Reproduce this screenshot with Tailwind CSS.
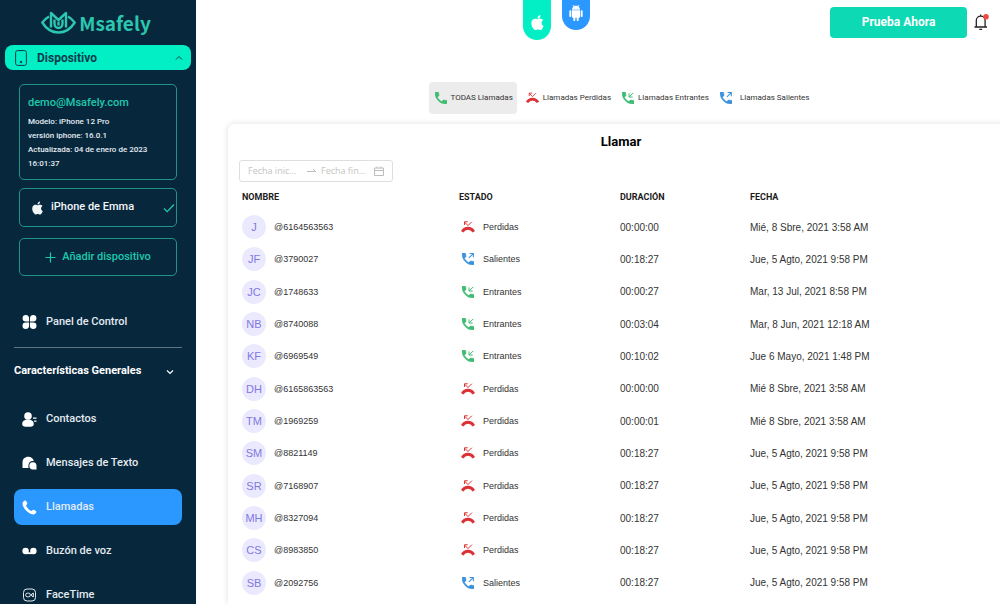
<!DOCTYPE html>
<html lang="es">
<head>
<meta charset="utf-8">
<title>Msafely - Llamadas</title>
<script src="https://cdn.jsdelivr.net/npm/@tailwindcss/browser@4"></script>
</head>
<body class="flex h-screen overflow-hidden bg-white font-['Roboto',sans-serif] text-black">

<svg class="hidden" aria-hidden="true">
  <symbol id="apple" viewBox="0 0 24 24"><path fill="currentColor" d="M12.152 6.896c-.948 0-2.415-1.078-3.96-1.04-2.04.027-3.91 1.183-4.961 3.014-2.117 3.675-.546 9.103 1.519 12.09 1.013 1.454 2.208 3.09 3.792 3.039 1.52-.065 2.09-.987 3.935-.987 1.831 0 2.35.987 3.96.948 1.637-.026 2.676-1.48 3.676-2.948 1.156-1.688 1.636-3.325 1.662-3.415-.039-.013-3.182-1.221-3.22-4.857-.026-3.04 2.48-4.494 2.597-4.559-1.429-2.09-3.623-2.324-4.39-2.376-2-.156-3.675 1.09-4.61 1.09zM15.53 3.83c.843-1.012 1.4-2.427 1.245-3.83-1.207.052-2.662.805-3.532 1.818-.78.896-1.454 2.338-1.273 3.714 1.338.104 2.715-.688 3.559-1.701"/></symbol>
  <symbol id="call" viewBox="3 3 18 18"><path fill="currentColor" stroke="currentColor" stroke-width=".7" d="M6.62 10.79c1.44 2.83 3.76 5.14 6.59 6.59l2.2-2.2c.27-.27.67-.36 1.02-.24 1.12.37 2.33.57 3.57.57.55 0 1 .45 1 1V20c0 .55-.45 1-1 1-9.39 0-17-7.61-17-17 0-.55.45-1 1-1h3.5c.55 0 1 .45 1 1 0 1.25.2 2.45.57 3.57.11.35.03.74-.25 1.02l-2.2 2.2z"/></symbol>
  <symbol id="in" viewBox="3 3 18 18"><use href="#call" x="3" y="3" width="18" height="18"/><path fill="none" stroke="currentColor" stroke-width="1.5" d="M20 4.2 14 10.2M13.6 5.2v5.4H19"/></symbol>
  <symbol id="out" viewBox="3 3 18 18"><use href="#call" x="3" y="3" width="18" height="18"/><path fill="none" stroke="currentColor" stroke-width="1.6" d="M13.4 10.4 19.8 4M14.4 3.8H20v5.6"/></symbol>
  <symbol id="missed" viewBox="0 2 24 20"><path fill="none" stroke="currentColor" stroke-width="4.8" d="M2 20C7 12.200 17 12.200 22 20"/><path fill="none" stroke="currentColor" stroke-width="1.700" d="M18.500 3l-6.500 6.500-6-6M6 8.500V3h5.500"/></symbol>
</svg>

<aside class="flex w-[196px] shrink-0 flex-col bg-[#07273d]">
  <a href="#" class="flex h-[45px] shrink-0 items-center justify-center gap-[3px] pr-1 text-[#2cc7ae]" aria-label="Msafely">
    <svg class="h-[23px] w-[35px]" viewBox="0 0 35 23" fill="none" stroke="currentColor" stroke-width="2.400" stroke-linejoin="round" aria-hidden="true">
      <path d="M8 5.500C5.500 7 3 9.200 1.300 11.500 5 17.500 11 21.500 17.500 21.500S30 17.500 33.700 11.500C32 9.200 29.500 7 27 5.500"/>
      <path d="M10 16.500V2l7.500 7L25 2v14.500"/>
      <path d="M13.500 8.500v4c0 6 8 6 8 0v-4M17.500 10.500v4"/>
    </svg>
    <span class="font-['Noto_Sans_CJK_SC',sans-serif] text-[19px] leading-6 font-bold">Msafely</span>
  </a>

  <button class="mx-[5px] flex h-[25px] shrink-0 items-center rounded-lg bg-[#02efc5] pr-2 pl-[10px] text-left text-[#0b3b4c]">
    <svg class="h-4 w-3" viewBox="0 0 12 16" fill="none" stroke="currentColor" aria-hidden="true"><rect x=".6" y=".6" width="10.800" height="14.800" rx="2"/><circle cx="6" cy="12" r=".8" fill="currentColor"/></svg>
    <span class="ml-[10px] flex-1 text-xs font-bold">Dispositivo</span>
    <svg class="h-2 w-2" viewBox="0 0 8 8" fill="none" stroke="currentColor" aria-hidden="true"><path d="M1 5.500 4 2.500l3 3"/></svg>
  </button>

  <section class="mx-[19px] mt-[14px] flex shrink-0 flex-col gap-2">
    <div class="rounded-[5px] border border-[#209585] px-2 pt-[10px] pb-2 text-[8px] leading-[14px] font-medium text-[#e5edf2]">
      <p class="mb-1 text-[11px] leading-4 text-[#1fc9ab]">demo@Msafely.com</p>
      <p>Modelo: iPhone 12 Pro</p>
      <p>versión iphone: 16.0.1</p>
      <p>Actualizada: 04 de enero de 2023</p>
      <p>16:01:37</p>
    </div>
    <button class="flex h-[39px] items-center rounded-[5px] border border-[#209585] pl-[11px] text-left text-[11px] font-medium text-[#f2f6f8]">
      <svg class="h-[14px] w-[13px]" aria-hidden="true"><use href="#apple"/></svg>
      <span class="ml-[7px] flex-1">iPhone de Emma</span>
      <svg class="mr-px h-3 w-3 text-[#22cdb0]" viewBox="0 0 12 12" fill="none" stroke="currentColor" stroke-width="1.200" aria-hidden="true"><path d="m1 6.500 3.200 3.200L11 2.500"/></svg>
    </button>
    <button class="mt-[3px] flex h-[38px] items-center justify-center gap-[6px] rounded-[5px] border border-[#209585] text-[11px] font-medium text-[#1fc9ab]">
      <svg class="h-[11px] w-[11px]" viewBox="0 0 11 11" fill="none" stroke="currentColor" stroke-width="1.200" aria-hidden="true"><path d="M5.500.5v10M.5 5.500h10"/></svg>
      <span>Añadir dispositivo</span>
    </button>
  </section>

  <nav class="mx-[14px] mt-[28px] flex shrink-0 flex-col text-[11px] font-medium text-[#e3ebf0]">
    <a href="#" class="flex h-9 items-center gap-[9px] pl-2">
      <svg class="h-[14px] w-[15px] text-white" viewBox="0 0 15 15" fill="currentColor" aria-hidden="true"><path d="M3.600 0A3.600 3.600 0 0 1 7 3.600V7H3.600A3.500 3.500 0 0 1 3.600 0M11.400 0a3.500 3.500 0 0 1 0 7H8V3.600A3.600 3.600 0 0 1 11.400 0M3.600 8H7v3.400A3.500 3.500 0 1 1 3.600 8M8 8h3.400A3.500 3.500 0 1 1 8 11.400z"/></svg>
      <span>Panel de Control</span>
    </a>
    <button class="mt-[7px] flex h-12 items-center justify-between border-t border-[#5d7485] pr-2 text-left font-bold text-white">
      <span>Características Generales</span>
      <svg class="h-2 w-2" viewBox="0 0 8 8" fill="none" stroke="currentColor" stroke-width="1.200" aria-hidden="true"><path d="m1 2.500 3 3 3-3"/></svg>
    </button>
    <div class="mt-[6px] flex flex-col gap-2">
      <a href="#" class="flex h-9 items-center gap-[9px] pl-2">
        <svg class="h-[15px] w-[15px] text-white" viewBox="0 0 15 15" fill="currentColor" aria-hidden="true"><circle cx="6" cy="4" r="3.800"/><path d="M6 7.500c3.500 0 5.800 1.600 5.800 4.500 0 2-1.500 2.800-5.800 2.800S.2 14 .2 12C.2 9.100 2.500 7.500 6 7.500M11 5.500h3.500v1.200H11zM12 8.500h2.500v1.200H12z"/></svg>
        <span>Contactos</span>
      </a>
      <a href="#" class="flex h-9 items-center gap-[9px] pl-2">
        <svg class="h-[14px] w-[15px] text-white" viewBox="0 0 15 14" fill="currentColor" aria-hidden="true"><path d="M.5 12V6.500C.5 3 3 .8 6.300.8c2.800 0 5 1.600 5.500 4.200-3.700-.5-6 2-5.200 7z"/><path d="M14.500 13.500v-4a3.600 3.600 0 1 0-3.600 4z"/></svg>
        <span>Mensajes de Texto</span>
      </a>
      <a href="#" aria-current="page" class="flex h-9 items-center gap-[9px] rounded-lg bg-[#2b98ff] pl-2">
        <svg class="h-[15px] w-[15px] text-white" viewBox="0 0 15 15" fill="currentColor" aria-hidden="true"><path d="M3.300.6c.7 0 2 2.200 2 3 0 .9-1.200 1.300-1.100 2.100.2 1.500 3.400 4.900 5 5.200.8.100 1.300-1.200 2.200-1.200.8 0 3 1.300 3 2.100 0 1-1.600 2.700-3 2.700C7 14.500.5 8 .5 3.700.5 2.300 2.200.6 3.300.6"/></svg>
        <span>Llamadas</span>
      </a>
      <a href="#" class="flex h-9 items-center gap-[9px] pl-2">
        <svg class="h-[14px] w-[15px] text-white" viewBox="0 0 15 14" aria-hidden="true"><path d="M3.500 9.200h8" stroke="currentColor" stroke-width="1.800"/><g fill="currentColor"><circle cx="3.600" cy="7" r="3.200"/><circle cx="11.400" cy="7" r="3.200"/></g></svg>
        <span>Buzón de voz</span>
      </a>
      <a href="#" class="flex h-9 items-center gap-[9px] pl-2">
        <svg class="h-[14px] w-[15px]" viewBox="0 0 15 14" fill="none" stroke="currentColor" aria-hidden="true"><rect x="1.500" y="1" width="12" height="12" rx="3.500"/><rect x="3.700" y="5.200" width="4.600" height="3.600" rx="1.600"/><path d="m11.300 5-2.500 2 2.500 2z"/></svg>
        <span>FaceTime</span>
      </a>
    </div>
  </nav>
</aside>

<main class="flex min-w-0 flex-1 flex-col">
  <header class="flex h-[82px] shrink-0 items-start pr-[11px]">
    <div class="flex-[327]"></div>
    <button aria-label="iOS" class="flex h-10 w-7 items-end justify-center rounded-b-full bg-[#02efc5] pb-[10px] text-white"><svg class="h-[15px] w-[15px]" aria-hidden="true"><use href="#apple"/></svg></button>
    <button aria-label="Android" class="ml-[11px] flex h-[30px] w-7 items-end justify-center rounded-b-full bg-[#2b98ff] pb-[9px] text-white">
      <svg class="h-4 w-4" viewBox="0 0 24 24" fill="currentColor" aria-hidden="true"><path d="M6 18c0 .55.45 1 1 1h1v3.500c0 .83.67 1.500 1.500 1.500s1.500-.67 1.500-1.500V19h2v3.500c0 .83.67 1.500 1.500 1.500s1.500-.67 1.500-1.500V19h1c.55 0 1-.45 1-1V8H6v10zM3.500 8C2.670 8 2 8.670 2 9.500v7c0 .83.67 1.500 1.500 1.500S5 17.330 5 16.500v-7C5 8.670 4.330 8 3.500 8zm17 0c-.83 0-1.500.67-1.500 1.500v7c0 .83.67 1.500 1.500 1.500s1.500-.67 1.500-1.500v-7c0-.83-.67-1.500-1.500-1.500zm-4.970-5.840l1.300-1.300c.2-.2.2-.51 0-.71-.2-.2-.51-.2-.71 0l-1.480 1.480C13.850 1.230 12.950 1 12 1c-.96 0-1.860.23-2.660.63L7.850.15c-.2-.2-.51-.2-.71 0-.2.2-.2.51 0 .71l1.310 1.310C6.970 3.260 6 5.010 6 7h12c0-1.990-.97-3.750-2.470-4.840zM10 5H9V4h1v1zm5 0h-1V4h1v1z"/></svg>
    </button>
    <div class="flex-[240]"></div>
    <button class="mt-[7px] h-[31px] w-[137px] rounded-[4px] bg-[#0dd9b4] pb-[2px] text-xs font-bold text-white">Prueba Ahora</button>
    <button aria-label="Notificaciones" class="mt-[13px] ml-[7px]">
      <svg class="h-[18px] w-[15px] text-[#222]" viewBox="0 0 15 18" fill="none" stroke="currentColor" stroke-width="1.300" aria-hidden="true"><path d="M.5 14h12.500M2.300 14V7.500a4.400 4.400 0 0 1 8.800 0V14M6.700 3V1.500M5.300 16.400h2.800"/><circle cx="12" cy="3.700" r="2.800" fill="#ee4a45" stroke="none"/></svg>
    </button>
  </header>

  <nav class="-mr-[14px] ml-8 flex h-8 shrink-0 items-stretch justify-center gap-[9px] pr-[4px] text-[8px] text-[#333]">
    <button class="flex items-center gap-1 rounded-[4px] bg-[#ececec] pr-1 pl-[6px]"><svg class="h-3 w-[12px] text-[#3dbd72]" aria-hidden="true"><use href="#call"/></svg>TODAS Llamadas</button>
    <button class="flex items-center gap-1"><svg class="h-[12px] w-[13px] text-[#dc3236]" aria-hidden="true"><use href="#missed"/></svg>Llamadas Perdidas</button>
    <button class="ml-[2px] flex items-center gap-1"><svg class="h-3 w-3 text-[#3dbd72]" aria-hidden="true"><use href="#in"/></svg>Llamadas Entrantes</button>
    <button class="ml-[2px] flex items-center gap-2"><svg class="h-3 w-3 text-[#3b92dc]" aria-hidden="true"><use href="#out"/></svg>Llamadas Salientes</button>
  </nav>

  <section class="mt-[10px] -mr-[14px] ml-8 flex-1 rounded-t-md bg-white px-[11px] pt-2 shadow-[0_0_6px_rgba(0,0,0,0.13)]">
    <h1 class="text-center text-[13px] leading-5 font-bold">Llamar</h1>
    <div class="mt-2 flex h-[22px] w-[154px] items-center rounded-[3px] border border-[#dedede] px-2 text-[#bdbdbd]">
      <input aria-label="Fecha inicial" placeholder="Fecha inic..." class="w-[54px] font-['Open_Sans',sans-serif] text-[9px] outline-none placeholder:text-[#c4c4c4]">
      <svg class="mx-[5px] h-2 w-[9px] shrink-0" viewBox="0 0 9 8" fill="none" stroke="currentColor" aria-hidden="true"><path d="M0 4.500h8.500M6 2l2.500 2.500"/></svg>
      <input aria-label="Fecha final" placeholder="Fecha fin..." class="w-[54px] min-w-0 font-['Open_Sans',sans-serif] text-[9px] outline-none placeholder:text-[#c4c4c4]">
      <svg class="h-[10px] w-[10px] shrink-0" viewBox="0 0 10 10" fill="none" stroke="currentColor" aria-hidden="true"><path d="M.5 2h9v7.500h-9zM.5 4.500h9M3 .5v2M7 .5v2"/></svg>
    </div>
    <table class="mt-[2px] ml-[3px] h-[415px] table-fixed border-collapse font-['Liberation_Sans',sans-serif] text-[10px] text-[#333]">
      <thead>
        <tr class="h-[27px] text-left font-['Roboto',sans-serif] text-[9px] text-[#1c1c1c]">
          <th scope="col" class="w-[217px]">NOMBRE</th>
          <th scope="col" class="w-[161px]">ESTADO</th>
          <th scope="col" class="w-[130px]">DURACIÓN</th>
          <th scope="col" class="w-[250px]">FECHA</th>
        </tr>
      </thead>
      <tbody id="calls"></tbody>
    </table>
  </section>
</main>

<script>
  const calls = [
    ["J", "@6164563563", "missed", "00:00:00", "Mié, 8 Sbre, 2021 3:58 AM"],
    ["JF", "@3790027", "out", "00:18:27", "Jue, 5 Agto, 2021 9:58 PM"],
    ["JC", "@1748633", "in", "00:00:27", "Mar, 13 Jul, 2021 8:58 PM"],
    ["NB", "@8740088", "in", "00:03:04", "Mar, 8 Jun, 2021 12:18 AM"],
    ["KF", "@6969549", "in", "00:10:02", "Jue 6 Mayo, 2021 1:48 PM"],
    ["DH", "@6165863563", "missed", "00:00:00", "Mié 8 Sbre, 2021 3:58 AM"],
    ["TM", "@1969259", "missed", "00:00:01", "Mié 8 Sbre, 2021 3:58 AM"],
    ["SM", "@8821149", "missed", "00:18:27", "Jue, 5 Agto, 2021 9:58 PM"],
    ["SR", "@7168907", "missed", "00:18:27", "Jue, 5 Agto, 2021 9:58 PM"],
    ["MH", "@8327094", "missed", "00:18:27", "Jue, 5 Agto, 2021 9:58 PM"],
    ["CS", "@8983850", "missed", "00:18:27", "Jue, 5 Agto, 2021 9:58 PM"],
    ["SB", "@2092756", "out", "00:18:27", "Jue, 5 Agto, 2021 9:58 PM"]
  ];
  const kinds = {
    missed: ["Perdidas", "text-[#dc3236]"],
    in: ["Entrantes", "text-[#3dbd72]"],
    out: ["Salientes", "text-[#3b92dc]"]
  };
  document.getElementById("calls").innerHTML = calls.map(([initials, name, kind, duration, date]) => `
    <tr class="h-8">
      <td class="p-0"><div class="flex items-center gap-2"><span class="flex h-6 w-6 items-center justify-center rounded-full bg-[#ebe9fd] text-[11px] text-[#8078e2]">${initials}</span><span class="text-[9px] leading-3">${name}</span></div></td>
      <td class="p-0"><div class="flex items-center gap-2 pl-[2px] text-[9px] leading-3"><svg class="h-3 w-[14px] ${kinds[kind][1]}" aria-hidden="true"><use href="#${kind}"/></svg>${kinds[kind][0]}</div></td>
      <td class="p-0">${duration}</td>
      <td class="p-0">${date}</td>
    </tr>`).join("");
</script>
</body>
</html>
